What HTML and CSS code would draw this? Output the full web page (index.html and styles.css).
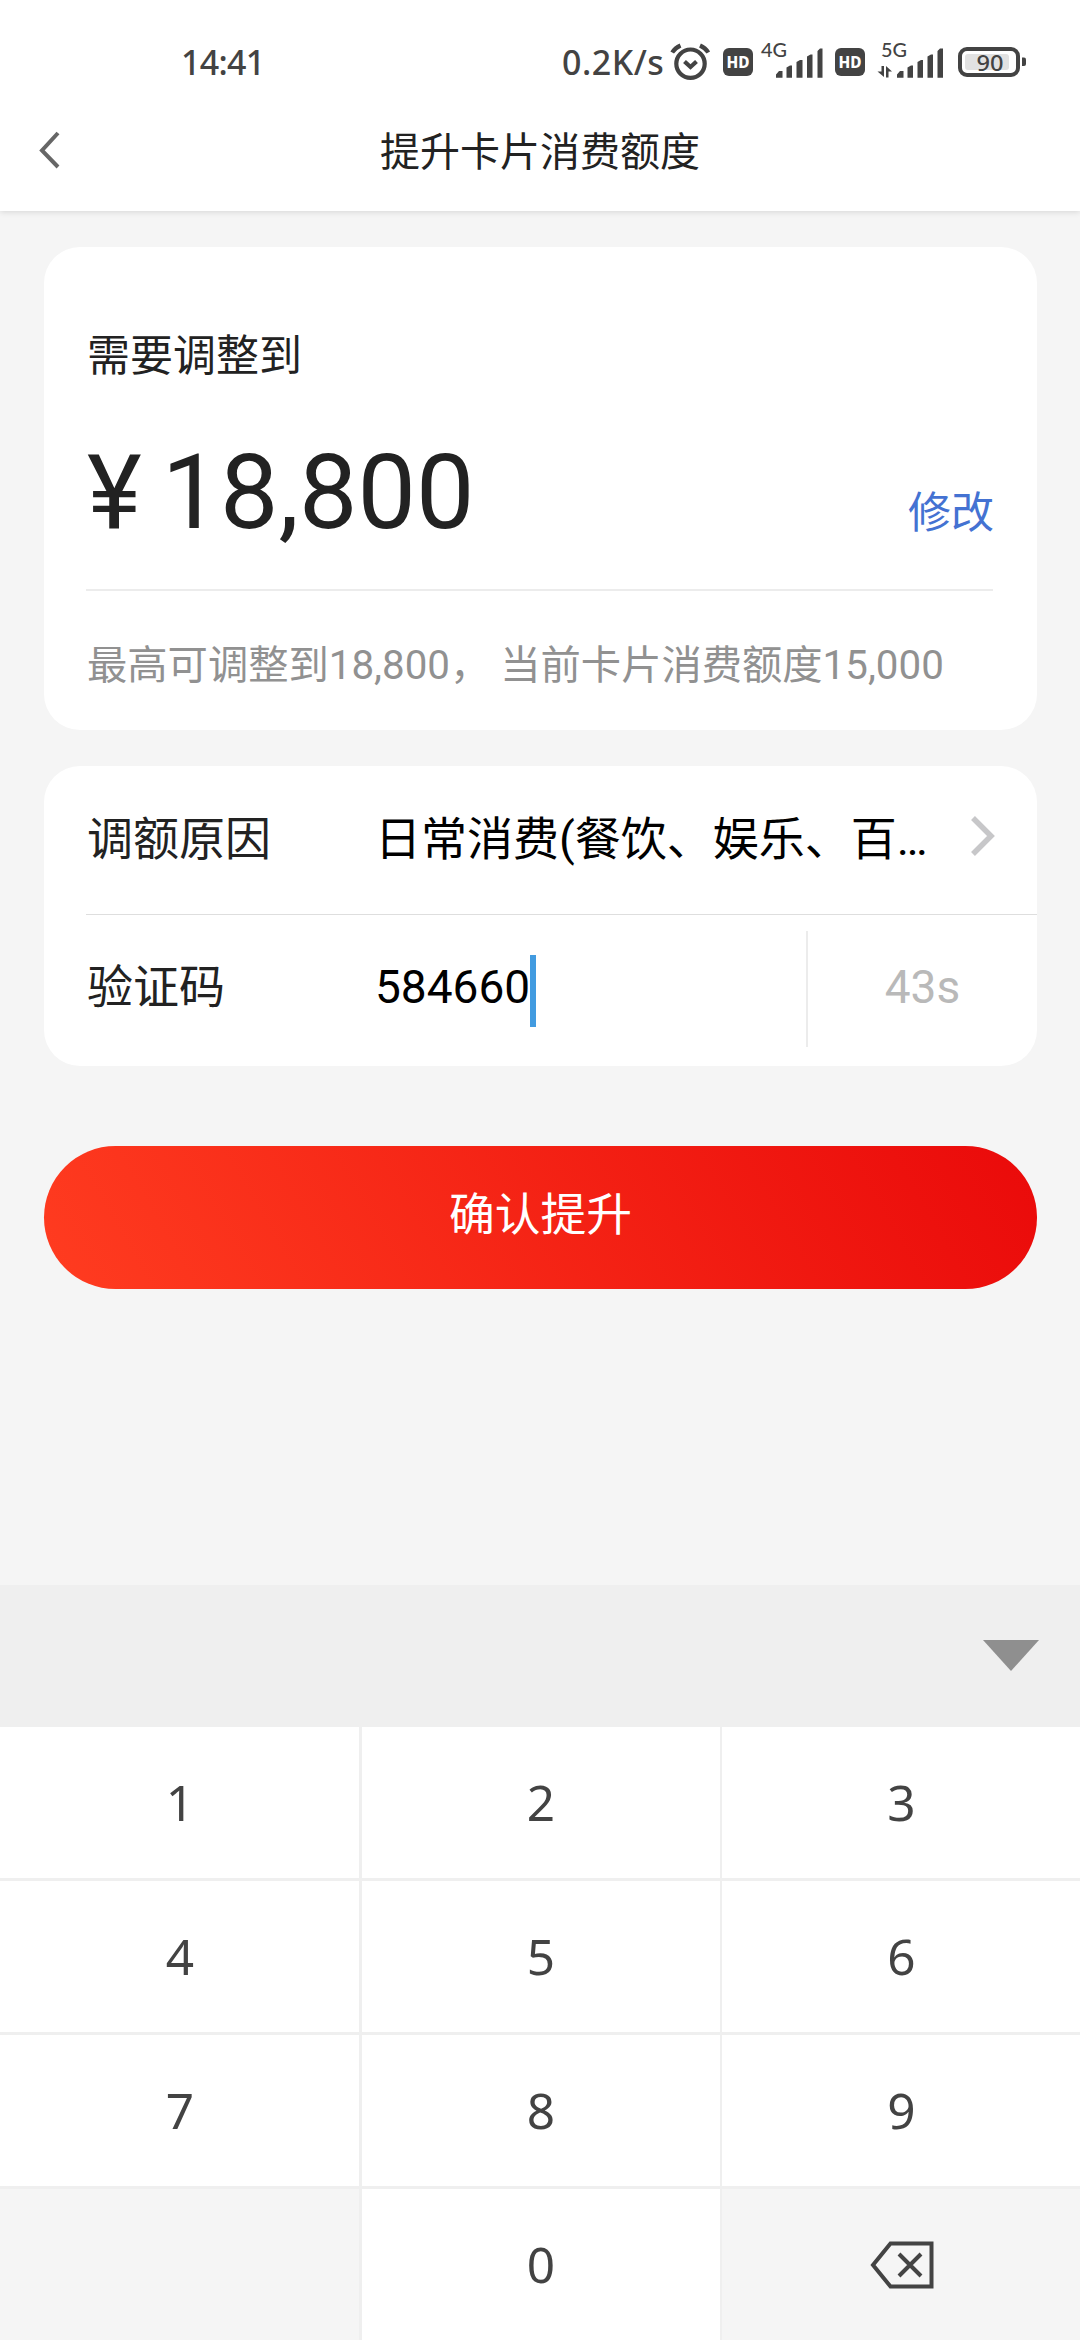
FILE: index.html
```html
<!DOCTYPE html>
<html lang="zh-CN">
<head>
<meta charset="utf-8">
<title>提升卡片消费额度</title>
<link rel="stylesheet" href="styles.css">
</head>
<body>
<div class="status">
  <span class="clock">14:41</span>
  <div class="indicators">
    <span class="speed">0.2K/s</span>
    <svg class="alarm" width="40" height="40" viewBox="0 0 40 40" fill="none" stroke="#434343" stroke-width="4.200">
      <circle cx="20.500" cy="21.700" r="14.200"/>
      <path d="M14.500 19.500l6 5.500 6-5.500M2.200 10.500Q5 6 10.500 3.500M38.300 10.500Q35.500 6 30 3.500"/>
    </svg>
    <svg class="hd" width="30" height="28" viewBox="0 0 30 28">
      <rect width="30" height="28" rx="6" fill="#434343"/>
      <text x="3.500" y="19.700" textLength="23" lengthAdjust="spacingAndGlyphs" class="hd-text">HD</text>
    </svg>
    <svg class="signal" width="66" height="40" viewBox="0 0 66 40">
      <text x="1" y="17" textLength="26" lengthAdjust="spacingAndGlyphs" class="net-text">4G</text>
      <path class="bars" d="M16 37.700V34.500L19 31H22.500V37.700zM26.500 37.700V27.500L30 25.500H32V37.700zM36.500 37.700V22L40 20H42.500V37.700zM47 37.700V16.500L50.500 14.500H52.500V37.700zM57.500 37.700V11L60 8.500H62.500V37.700z"/>
    </svg>
    <svg class="hd" width="30" height="28" viewBox="0 0 30 28">
      <rect width="30" height="28" rx="6" fill="#434343"/>
      <text x="3.500" y="19.700" textLength="23" lengthAdjust="spacingAndGlyphs" class="hd-text">HD</text>
    </svg>
    <svg class="signal signal-active" width="70" height="40" viewBox="0 0 70 40">
      <text x="4" y="17" textLength="26" lengthAdjust="spacingAndGlyphs" class="net-text">5G</text>
      <path class="bars" d="M4.500 26H7V37L0.500 31.500H4.500zM9 37.500V26L15 31.500H11.500V37.500zM20 37.700V34.500L23 31H26.500V37.700zM30.500 37.700V27.500L34 25.500H36V37.700zM40.500 37.700V22L44 20H46V37.700zM50.500 37.700V16.500L54 14.500H56V37.700zM60.500 37.700V11L63 8.500H66V37.700z"/>
    </svg>
    <svg class="battery" width="69" height="30" viewBox="0 0 69 30">
      <rect x="2" y="2" width="58" height="26" rx="7" fill="#fff" stroke="#434343" stroke-width="4"/>
      <rect x="7" y="7" width="44" height="16" rx="3" fill="#e2e2e2"/>
      <path d="M64 10.500h2q2 0 2 2v4.500q0 2-2 2h-2z" fill="#434343"/>
      <text x="18.500" y="23.700" textLength="27" lengthAdjust="spacingAndGlyphs" class="battery-text">90</text>
    </svg>
  </div>
</div>
<header class="nav">
  <svg class="back" width="24" height="40" viewBox="0 0 24 40" fill="none" stroke="#666" stroke-width="4"><path d="M20 3L4 20.500L20 37"/></svg>
  <h1 class="title">提升卡片消费额度</h1>
</header>
<main class="page">
  <section class="card amount-card">
    <div class="caption">需要调整到</div>
    <div class="amount-row">
      <div class="amount"><span class="yen">¥</span><span>18,800</span></div>
      <a class="edit">修改</a>
    </div>
    <div class="hint">最高可调整到18,800， 当前卡片消费额度15,000</div>
  </section>
  <section class="card form-card">
    <div class="row">
      <span class="label">调额原因</span>
      <span class="value">日常消费(餐饮、娱乐、百…</span>
      <svg class="chevron" width="26" height="42" viewBox="0 0 26 42" fill="none" stroke="#c7c7c9" stroke-width="5.500"><path d="M3 3L21 21L3 39"/></svg>
    </div>
    <div class="row code-row">
      <span class="label">验证码</span>
      <span class="value">584660</span>
      <i class="caret"></i>
      <span class="countdown">43s</span>
    </div>
  </section>
  <button class="submit">确认提升</button>
</main>
<section class="keyboard">
  <div class="toolbar"><svg width="56" height="31" viewBox="0 0 56 31"><path d="M0 0H56L28 31z" fill="#8f8f8f"/></svg></div>
  <div class="keys">
    <div class="key">1</div><div class="key">2</div><div class="key">3</div>
    <div class="key">4</div><div class="key">5</div><div class="key">6</div>
    <div class="key">7</div><div class="key">8</div><div class="key">9</div>
    <div class="key muted"></div><div class="key">0</div>
    <div class="key muted"><svg width="64" height="48" viewBox="0 0 64 48" fill="none" stroke="#434343" stroke-width="4"><path d="M20.500 2.500H61.500V45.500H20.500L3 24zM29 13L51 35M51 13L29 35"/></svg></div>
  </div>
</section>
</body>
</html>
```

FILE: styles.css
```css
* { box-sizing: border-box; }
body {
  margin: 0;
  width: 1080px;
  height: 2340px;
  display: flex;
  flex-direction: column;
  overflow: hidden;
  background: #f5f5f5;
  color: #222;
  font-family: Roboto, "Noto Sans CJK SC", sans-serif;
}
svg { display: block; flex: none; overflow: visible; }

.status {
  position: relative;
  z-index: 2;
  height: 90px;
  display: flex;
  justify-content: space-between;
  background: #fff;
  color: #434343;
}
.clock {
  margin: 38px 0 0 181px;
  font: 500 34px/48px "Noto Sans", sans-serif;
  letter-spacing: -0.7px;
}
.indicators { display: flex; padding-right: 53px; }
.speed {
  margin-top: 38px;
  width: 108px;
  font: 500 34px/48px "Noto Sans", sans-serif;
  letter-spacing: 0.5px;
  white-space: nowrap;
}
.alarm { margin-top: 42px; }
.hd { margin: 48px 0 0 13px; }
.signal { margin: 40px 0 0 7px; }
.signal + .hd { margin-left: 9px; }
.signal-active { margin-left: 12px; }
.battery { margin: 47px 0 0 11px; }
.hd-text { font: 800 16px/1 "Noto Sans", sans-serif; fill: #fff; }
.net-text { font: 500 19px/1 Lato, sans-serif; fill: #434343; }
.battery-text { font: 500 22.500px/1 "Noto Sans", sans-serif; fill: #434343; }
.bars { fill: #434343; }

.nav {
  position: relative;
  z-index: 1;
  height: 121px;
  display: grid;
  grid-template-columns: 80px 1fr 80px;
  align-items: start;
  background: #fff;
  box-shadow: 0 1px 6px rgba(0, 0, 0, 0.13);
}
.back { margin: 40px 0 0 38px; }
.title {
  margin: 33px 0 0;
  font-size: 40px;
  line-height: 60px;
  font-weight: 400;
  text-align: center;
}

.page { flex: 1; padding: 36px 43px 0 44px; }
.card { border-radius: 36px; background: #fff; }
.amount-card { height: 483px; padding: 79px 44px 0 42px; }
.caption { height: 58px; padding-left: 1px; font-size: 43px; line-height: 60px; }
.amount-row {
  height: 207px;
  display: flex;
  justify-content: space-between;
  border-bottom: 2px solid #ececec;
}
.amount { display: flex; font-size: 104px; line-height: 120px; margin: 49px 0 0 1px; }
.yen { margin-right: 20px; }
.edit { margin: 99px -1px 0 0; font-size: 43px; line-height: 60px; color: #4472d2; }
.hint {
  margin: 45px 0 0 1px;
  font-size: 40.300px;
  line-height: 60px;
  color: #919191;
  white-space: nowrap;
}

.form-card { height: 300px; margin-top: 36px; padding-left: 42px; font-size: 46px; }
.row { height: 149px; display: flex; border-bottom: 1px solid #dedede; line-height: 60px; }
.label { width: 289px; padding: 43px 0 0 1px; }
.value { padding-top: 43px; color: #000; white-space: nowrap; }
.row .chevron { margin: 49px 41px 0 auto; }
.code-row { height: 151px; border: 0; }
.code-row .label { padding-top: 42px; }
.code-row .value { padding-top: 42px; }
.caret { width: 6px; height: 72px; margin-top: 40px; background: #429be0; }
.countdown {
  width: 231px;
  height: 116px;
  margin: 16px 0 0 auto;
  padding-top: 26px;
  border-left: 2px solid #ececec;
  color: #b9b9b9;
  text-align: center;
}

.submit {
  display: block;
  width: 993px;
  height: 143px;
  margin-top: 80px;
  padding: 0 0 13px;
  border: 0;
  border-radius: 72px;
  background: linear-gradient(60deg, #ff3c20, #ea0a0a);
  color: #fff;
  font: inherit;
  font-size: 45.800px;
}

.keyboard { height: 755px; }
.toolbar {
  height: 142px;
  display: flex;
  justify-content: flex-end;
  padding: 55px 41px 0 0;
  background: #efefef;
}
.keys {
  display: grid;
  grid-template-columns: 359px 358px 358px;
  grid-auto-rows: 151px;
  column-gap: 2.500px;
  row-gap: 3px;
  background: #efefef;
}
.key {
  display: flex;
  align-items: center;
  justify-content: center;
  padding: 0 0 2px 1px;
  background: #fff;
  color: #434343;
  font: 400 49.500px/60px "Noto Sans", sans-serif;
}
.muted { padding-bottom: 0; background: #f5f5f5; }
```
